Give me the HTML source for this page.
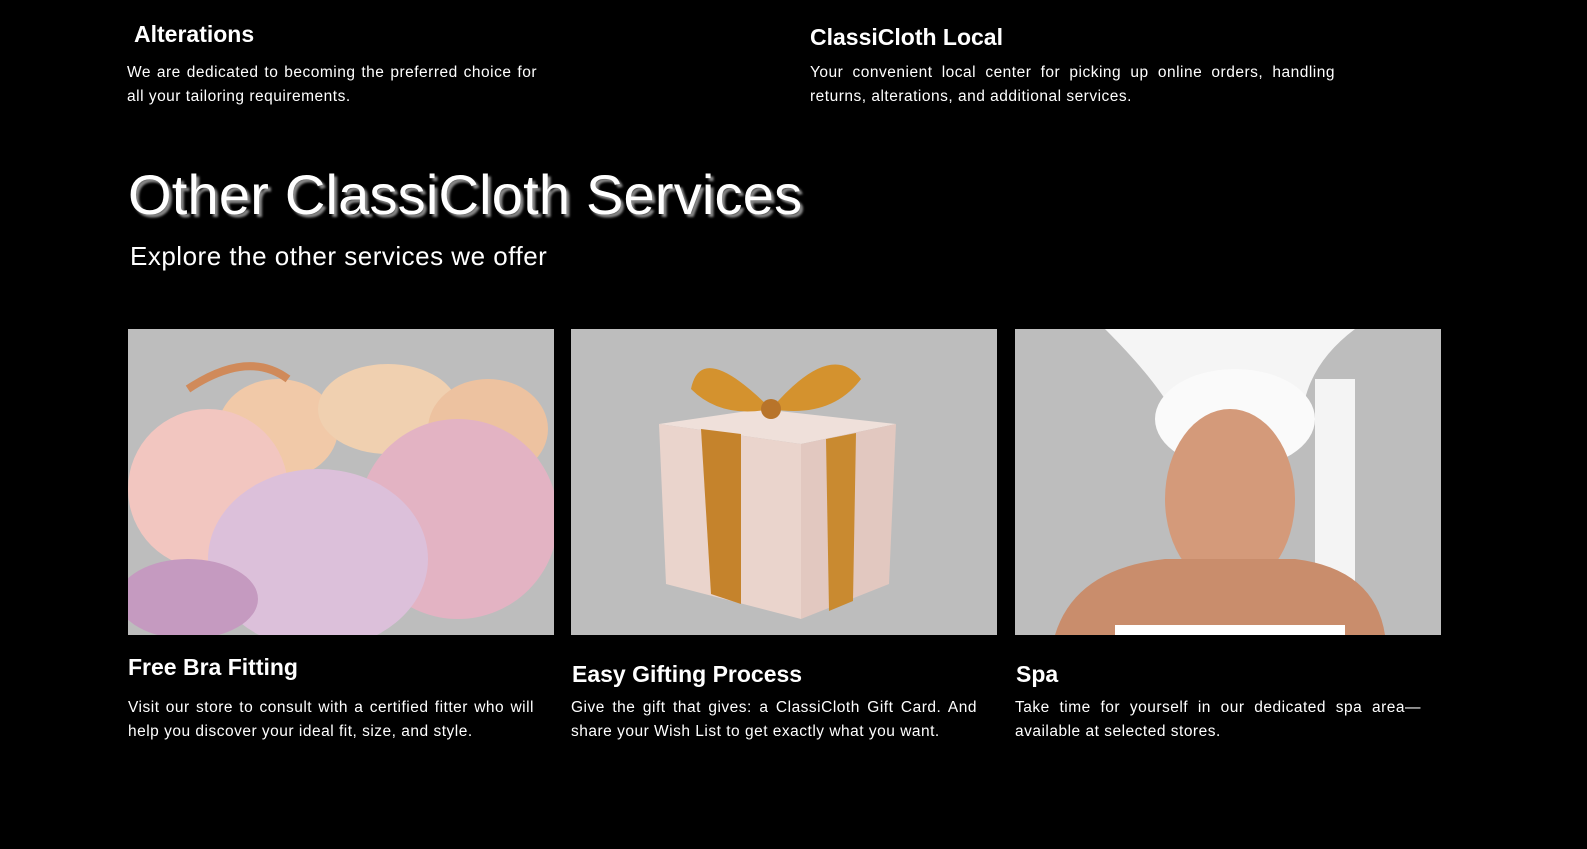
<!DOCTYPE html>
<html><head><style>
body{margin:0;width:1587px;height:849px;background:#000;color:#fff;font-family:"Liberation Sans",sans-serif;position:relative;overflow:hidden}
.a{position:absolute}
h3{margin:0;font-size:23px;font-weight:bold;position:absolute}
p{margin:0;position:absolute;font-size:15.5px;line-height:24px;text-align:justify;letter-spacing:0.5px}
.img{position:absolute;top:329px;width:426px;height:306px;background:#bdbdbd;overflow:hidden}
</style></head><body>
<h3 style="left:134px;top:21px">Alterations</h3>
<p style="left:127px;top:61px;width:410px">We are dedicated to becoming the preferred choice for all your tailoring requirements.</p>
<h3 style="left:810px;top:24px">ClassiCloth Local</h3>
<p style="left:810px;top:61px;width:525px">Your convenient local center for picking up online orders, handling returns, alterations, and additional services.</p>
<div class="a" style="left:128px;top:162px;font-size:56px;letter-spacing:0.2px;text-shadow:3px 3px 2px #888">Other ClassiCloth Services</div>
<div class="a" style="left:130px;top:241px;font-size:26px;letter-spacing:0.5px">Explore the other services we offer</div>

<div class="img" style="left:128px">
<svg width="426" height="306">
<ellipse cx="150" cy="100" rx="60" ry="50" fill="#f1c9a8"/>
<ellipse cx="260" cy="80" rx="70" ry="45" fill="#f0d0b0"/>
<ellipse cx="360" cy="100" rx="60" ry="50" fill="#edc2a0"/>
<ellipse cx="80" cy="160" rx="80" ry="80" fill="#f2c6c0"/>
<ellipse cx="330" cy="190" rx="100" ry="100" fill="#e3b3c3"/>
<ellipse cx="190" cy="230" rx="110" ry="90" fill="#dcc0da"/>
<ellipse cx="60" cy="270" rx="70" ry="40" fill="#c59ac0"/>
<path d="M60 60 Q120 20 160 50" stroke="#d08a5a" stroke-width="8" fill="none"/>
</svg></div>
<div class="img" style="left:571px">
<svg width="426" height="306">
<polygon points="88,95 190,80 325,95 230,115" fill="#efe0da"/>
<polygon points="88,95 230,115 230,290 95,255" fill="#ead4cc"/>
<polygon points="230,115 325,95 318,255 230,290" fill="#e2c8c0"/>
<polygon points="130,100 170,105 170,275 140,265" fill="#c5832c"/>
<polygon points="255,110 285,104 282,272 258,282" fill="#c98a30"/>
<path d="M200 80 Q130 10 120 60 Q150 90 200 80 Q260 10 290 50 Q260 90 200 80" fill="#d4922e"/>
<circle cx="200" cy="80" r="10" fill="#b8742a"/>
</svg></div>
<div class="img" style="left:1015px">
<svg width="426" height="306">
<rect x="300" y="50" width="40" height="256" fill="#f4f4f4"/>
<path d="M90 0 Q130 40 150 70 L290 70 Q300 30 340 0 Z" fill="#f5f5f5"/>
<ellipse cx="220" cy="90" rx="80" ry="50" fill="#fafafa"/>
<ellipse cx="215" cy="170" rx="65" ry="90" fill="#d49a7a"/>
<path d="M40 306 Q60 240 150 230 L280 230 Q360 240 370 306 Z" fill="#c98d6c"/>
<rect x="100" y="296" width="230" height="10" fill="#fff"/>
</svg></div>

<h3 style="left:128px;top:654px">Free Bra Fitting</h3>
<p style="left:128px;top:696px;width:406px">Visit our store to consult with a certified fitter who will help you discover your ideal fit, size, and style.</p>
<h3 style="left:572px;top:661px">Easy Gifting Process</h3>
<p style="left:571px;top:696px;width:406px">Give the gift that gives: a ClassiCloth Gift Card. And share your Wish List to get exactly what you want.</p>
<h3 style="left:1016px;top:661px">Spa</h3>
<p style="left:1015px;top:696px;width:406px">Take time for yourself in our dedicated spa area— available at selected stores.</p>
</body></html>
